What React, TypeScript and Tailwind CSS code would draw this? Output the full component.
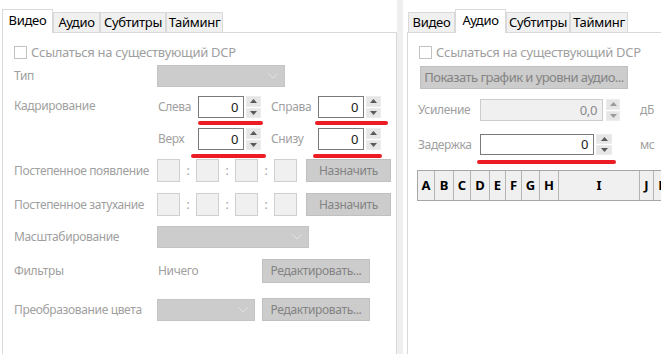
import React from "react";

const LBL = "text-[#a0a0a0]";

function Chevron() {
  return (
    <svg width="10" height="6" viewBox="0 0 10 6" className="block">
      <path d="M0.5 0.5 L5 5 L9.5 0.5" fill="none" stroke="#e2e2e2" strokeWidth="1" />
    </svg>
  );
}

function Combo({ w }: { w: string }) {
  return (
    <div className={`${w} h-[22px] bg-[#cccccc] border border-[#c4c4c4] flex items-center justify-end pr-[6px]`}>
      <Chevron />
    </div>
  );
}

function Tri({ up, color = "#5a5a5a" }: { up?: boolean; color?: string }) {
  return (
    <svg width="7" height="4" viewBox="0 0 7 4" className="block">
      {up ? <path d="M0 4 L3.5 0 L7 4 Z" fill={color} /> : <path d="M0 0 L3.5 4 L7 0 Z" fill={color} />}
    </svg>
  );
}

function SpinBtns({ w, light }: { w: string; light?: boolean }) {
  const c = light ? "#9a9a9a" : "#5a5a5a";
  return (
    <div className={`${w} flex flex-col gap-[1px]`}>
      <div className="flex-1 bg-[#e6e6e6] border border-[#ececec] flex items-center justify-center">
        <Tri up color={c} />
      </div>
      <div className="flex-1 bg-[#e6e6e6] border border-[#ececec] flex items-center justify-center">
        <Tri color={c} />
      </div>
    </div>
  );
}

function Spin({ boxW, btnW, gap, h = "h-[22px]" }: { boxW: string; btnW: string; gap: string; h?: string }) {
  return (
    <div className={`flex ${h} ${gap}`}>
      <div className={`${boxW} h-full bg-white border border-[#7a7a7a] flex items-center justify-end pr-[5px] text-[#1a1a1a] text-[13px]`}>0</div>
      <SpinBtns w={btnW} />
    </div>
  );
}

function RedLine({ cls }: { cls: string }) {
  return <div className={`absolute h-[4px] rounded-full bg-[#ec1c24] ${cls}`} />;
}

function Checkbox({ label }: { label: string }) {
  return (
    <div className="flex items-center h-[14px]">
      <div className="w-[13px] h-[13px] border border-[#c2c2c2] bg-white" />
      <span className={`ml-[4px] ${LBL} text-[13px] tracking-[-0.3px]`}>{label}</span>
    </div>
  );
}

function GrayBtn({ w, h, text }: { w: string; h: string; text: string }) {
  return (
    <div className={`${w} ${h} bg-[#cccccc] border border-[#c0c0c0] flex items-center justify-center text-[#838383]`}>{text}</div>
  );
}

function Tabs({ tabs, sel }: { tabs: { t: string; w: string }[]; sel: number }) {
  return (
    <div className="flex items-end h-[32px] text-[13px] tracking-[-0.3px]">
      {tabs.map((tab, i) =>
        i === sel ? (
          <div
            key={tab.t}
            className={`${tab.w} h-[24px] bg-white border border-b-0 border-[#d9d9d9] flex items-center justify-center text-black relative z-10 -mb-[1px] pb-[2px]`}
          >
            {tab.t}
          </div>
        ) : (
          <div
            key={tab.t}
            className={`${tab.w} h-[20px] bg-[#f0f0f0] border border-b-0 border-[#d9d9d9] flex items-center justify-center text-black`}
          >
            {tab.t}
          </div>
        )
      )}
    </div>
  );
}

function FadeRow({ label }: { label: string }) {
  return (
    <div className="flex items-center h-[23px]">
      <div className={`w-[143px] ${LBL}`}>{label}</div>
      <div className="flex items-center">
        {[0, 1, 2, 3].map((i) => (
          <React.Fragment key={i}>
            <div className="w-[23px] h-[23px] bg-[#f0f0f0] border border-[#cfcfcf]" />
            {i < 3 && <div className={`w-[16px] text-center ${LBL}`}>:</div>}
          </React.Fragment>
        ))}
      </div>
      <div className="ml-[9px]">
        <GrayBtn w="w-[85px]" h="h-[23px]" text="Назначить" />
      </div>
    </div>
  );
}

const cols: { l: string; w: string }[] = [
  { l: "A", w: "w-[17px]" },
  { l: "B", w: "w-[19px]" },
  { l: "C", w: "w-[17px]" },
  { l: "D", w: "w-[19px]" },
  { l: "E", w: "w-[16px]" },
  { l: "F", w: "w-[16px]" },
  { l: "G", w: "w-[18px]" },
  { l: "H", w: "w-[19px]" },
  { l: "I", w: "w-[81px]" },
  { l: "J", w: "w-[14px]" },
  { l: "K", w: "w-[18px]" },
];

export default function App() {
  return (
    <div className="w-[661px] h-[354px] bg-white overflow-hidden flex font-['Noto_Sans',sans-serif] text-[12px] tracking-[-0.35px] leading-none">
      {/* Left panel */}
      <div className="w-[397px] shrink-0 flex flex-col pl-[2px]">
        <Tabs
          sel={0}
          tabs={[
            { t: "Видео", w: "w-[51px]" },
            { t: "Аудио", w: "w-[47px]" },
            { t: "Субтитры", w: "w-[66px]" },
            { t: "Тайминг", w: "w-[57px]" },
          ]}
        />
        <div className="flex-1 border border-b-0 border-[#d9d9d9] pl-[11px] flex flex-col">
          <div className="mt-[12px]">
            <Checkbox label="Ссылаться на существующий DCP" />
          </div>
          <div className="mt-[6px] flex items-center h-[22px]">
            <div className={`w-[143px] ${LBL}`}>Тип</div>
            <Combo w="w-[128px]" />
          </div>
          {/* Crop */}
          <div className="mt-[9px] flex">
            <div className={`w-[143px] pt-[4px] ${LBL}`}>Кадрирование</div>
            <div className="flex flex-col">
              <div className="flex items-center h-[22px] relative">
                <div className={`w-[41px] pl-[1px] ${LBL}`}>Слева</div>
                <Spin boxW="w-[46px]" btnW="w-[15px]" gap="gap-[2px]" />
                <div className={`w-[57px] pl-[10px] ${LBL}`}>Справа</div>
                <Spin boxW="w-[46px]" btnW="w-[15px]" gap="gap-[2px]" />
                <RedLine cls="left-[41px] top-[25px] w-[65px]" />
                <RedLine cls="left-[158px] top-[25px] w-[73px]" />
              </div>
              <div className="mt-[10px] flex items-center h-[22px] relative">
                <div className={`w-[41px] pl-[1px] ${LBL}`}>Верх</div>
                <Spin boxW="w-[46px]" btnW="w-[15px]" gap="gap-[2px]" />
                <div className={`w-[57px] pl-[10px] ${LBL}`}>Снизу</div>
                <Spin boxW="w-[46px]" btnW="w-[15px]" gap="gap-[2px]" />
                <RedLine cls="left-[34px] top-[26px] w-[75px]" />
                <RedLine cls="left-[156px] top-[26px] w-[69px]" />
              </div>
            </div>
          </div>
          <div className="mt-[9px]">
            <FadeRow label="Постепенное появление" />
          </div>
          <div className="mt-[11px]">
            <FadeRow label="Постепенное затухание" />
          </div>
          <div className="mt-[10px] flex items-center h-[22px]">
            <div className={`w-[143px] ${LBL}`}>Масштабирование</div>
            <Combo w="w-[152px]" />
          </div>
          <div className="mt-[11px] flex items-center h-[24px]">
            <div className={`w-[143px] ${LBL}`}>Фильтры</div>
            <div className={`w-[105px] pl-[1px] ${LBL}`}>Ничего</div>
            <GrayBtn w="w-[108px]" h="h-[24px]" text="Редактировать..." />
          </div>
          <div className="mt-[15px] flex items-center h-[23px]">
            <div className={`w-[143px] ${LBL}`}>Преобразование цвета</div>
            <Combo w="w-[98px]" />
            <div className="ml-[7px]">
              <GrayBtn w="w-[108px]" h="h-[23px]" text="Редактировать..." />
            </div>
          </div>
        </div>
      </div>

      {/* Splitter */}
      <div className="w-[6px] shrink-0 bg-[#efefef]" />

      {/* Right panel */}
      <div className="flex-1 min-w-0 flex flex-col pl-[4px]">
        <div className="pl-[1px]">
          <Tabs
            sel={1}
            tabs={[
              { t: "Видео", w: "w-[47px]" },
              { t: "Аудио", w: "w-[51px]" },
              { t: "Субтитры", w: "w-[64px]" },
              { t: "Тайминг", w: "w-[58px]" },
            ]}
          />
        </div>
        <div className="flex-1 border-l border-t border-[#d9d9d9] flex flex-col">
          <div className="mt-[12px] pl-[11px]">
            <Checkbox label="Ссылаться на существующий DCP" />
          </div>
          <div className="mt-[7px] pl-[12px] text-[13px] tracking-[-0.55px]">
            <GrayBtn w="w-[208px]" h="h-[23px]" text="Показать график и уровни аудио..." />
          </div>
          <div className="mt-[10px] pl-[10px] flex items-center h-[22px]">
            <div className={`w-[62px] ${LBL}`}>Усиление</div>
            <div className="flex h-[22px] gap-[3px]">
              <div className="w-[123px] h-full bg-[#f0f0f0] border border-[#cccccc] flex items-center justify-end pr-[5px] text-[#8a8a8a] text-[13px]">
                0,0
              </div>
              <SpinBtns w="w-[14px]" light />
            </div>
            <div className={`ml-[20px] ${LBL}`}>дБ</div>
          </div>
          <div className="mt-[13px] pl-[10px] flex items-center h-[21px] relative">
            <div className={`w-[62px] ${LBL}`}>Задержка</div>
            <Spin boxW="w-[114px]" btnW="w-[16px]" gap="gap-[2px]" h="h-[21px]" />
            <div className={`ml-[28px] ${LBL}`}>мс</div>
            <RedLine cls="left-[69px] top-[26px] w-[139px]" />
          </div>
          <div className="mt-[15px] ml-[9px] flex h-[31px] border-t border-b border-l border-[#a6a6a6] bg-[#f0f0f0]">
            {cols.map((c) => (
              <div
                key={c.l}
                className={`${c.w} shrink-0 h-full border-r border-[#b4b4b4] flex items-center justify-center font-bold text-[13px] tracking-normal text-black`}
              >
                {c.l}
              </div>
            ))}
          </div>
        </div>
      </div>
    </div>
  );
}
